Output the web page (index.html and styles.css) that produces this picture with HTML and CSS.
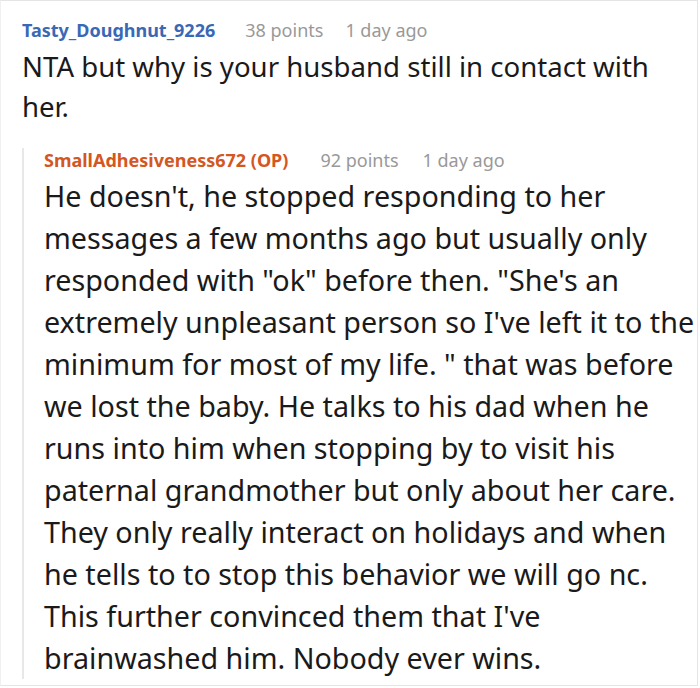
FILE: index.html
```html
<!DOCTYPE html>
<html>
<head>
<meta charset="utf-8">
<link rel="stylesheet" href="styles.css">
</head>
<body>
<div class="card">
  <div class="comment">
    <div class="meta"><span class="user">Tasty_Doughnut_9226</span><span class="info points">38 points</span><span class="info">1 day ago</span></div>
    <div class="body top">NTA but why is your husband still in contact with<br>her.</div>
    <div class="reply">
      <div class="meta"><span class="user op">SmallAdhesiveness672 (OP)</span><span class="info points">92 points</span><span class="info">1 day ago</span></div>
      <div class="body">He doesn't, he stopped responding to her<br>messages a few months ago but usually only<br>responded with "ok" before then. "She's an<br>extremely unpleasant person so I've left it to the<br>minimum for most of my life. " that was before<br>we lost the baby. He talks to his dad when he<br>runs into him when stopping by to visit his<br>paternal grandmother but only about her care.<br>They only really interact on holidays and when<br>he tells to to stop this behavior we will go nc.<br>This further convinced them that I've<br>brainwashed him. Nobody ever wins.</div>
    </div>
  </div>
</div>
</body>
</html>
```
FILE: styles.css
```css
html, body { margin: 0; padding: 0; background: #fff; }
body { font-family: "Noto Sans", "Open Sans", sans-serif; color: #1a1a1b; }
.card {
  width: 698px;
  height: 686px;
  box-sizing: border-box;
  border: 1px solid #e4e4e4;
  border-left-color: #f0f0f0;
  overflow: hidden;
}
.comment { padding: 17px 0 0 21px; }
.meta { display: flex; font-size: 18px; line-height: 24px; }
.user { font-weight: 700; color: #3a68b5; margin-right: 30px; }
.user.op { color: #d4571f; margin-right: 32px; }
.info { color: #999; }
.points { margin-right: 22px; }
.reply .points { margin-right: 24px; }
.body { font-size: 28.7px; line-height: 42px; white-space: nowrap; }
.body.top { font-size: 27.6px; line-height: 40px; margin-top: 4px; }
.reply {
  margin-top: 22px;
  border-left: 2px solid #e8e8e8;
  padding-left: 20px;
}
.reply .meta { margin-bottom: 3px; }
```
